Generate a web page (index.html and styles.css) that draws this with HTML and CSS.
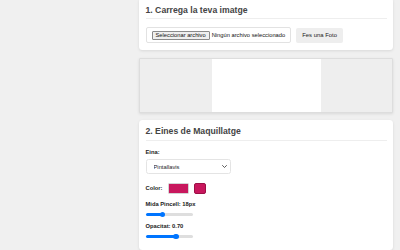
FILE: index.html
```html
<!DOCTYPE html>
<html lang="ca">
<head>
    <meta charset="UTF-8">
    <meta name="viewport" content="width=device-width, initial-scale=1.0">
    <title>Maquillatge Virtual</title>
    <link rel="stylesheet" href="styles.css">
</head>
<body>
    <main class="column">
        <!-- pas 1: carregar imatge -->
        <section class="card">
            <h2 class="card-title">1. Carrega la teva imatge</h2>
            <div class="upload-row">
                <label class="file-input">
                    <input type="file" accept="image/*" hidden>
                    <span class="file-btn">Seleccionar archivo</span>
                    <span class="file-name">Ningún archivo seleccionado</span>
                </label>
                <button class="btn" type="button">Fes una Foto</button>
            </div>
        </section>

        <!-- llenç -->
        <section class="card canvas-card">
            <canvas class="canvas" width="109" height="53"></canvas>
        </section>

        <!-- pas 2: eines -->
        <section class="card">
            <h2 class="card-title">2. Eines de Maquillatge</h2>

            <div class="field field-select">
                <label class="label" for="tool">Eina:</label>
                <div class="select-wrap">
                    <select id="tool" class="select">
                        <option>Pintallavis</option>
                        <option>Ombra d'ulls</option>
                        <option>Colorete</option>
                    </select>
                    <svg class="chevron" width="5" height="3" viewBox="0 0 10 6">
                        <path d="M1 1l4 4 4-4" fill="none" stroke="#333" stroke-width="1.6" stroke-linecap="round" stroke-linejoin="round"/>
                    </svg>
                </div>
            </div>

            <div class="field color-field">
                <label class="label" for="color">Color:</label>
                <input type="color" id="color" class="color-input" value="#c8175d">
                <span class="swatch"></span>
            </div>

            <div class="field">
                <label class="label" for="size">Mida Pincell: 18px</label>
                <input type="range" id="size" class="range" min="1" max="50" value="18" style="--fill: 36.5%">
            </div>

            <div class="field field-last">
                <label class="label" for="opacity">Opacitat: 0.70</label>
                <input type="range" id="opacity" class="range" min="0.1" max="1" step="0.05" value="0.7" style="--fill: 64.7%">
            </div>
        </section>
    </main>
</body>
</html>
```

FILE: styles.css
```css
/* pàgina */
html, body {
    overflow: hidden;
}

body {
    margin: 0;
    background-color: #f0f0f0;
    font-family: "Liberation Sans", Arial, sans-serif;
    color: #333;
}

/* columna de la dreta */
.column {
    width: 254px;
    margin: -2px 7px 0 auto;
}

/* targetes */
.card {
    background-color: #fff;
    border-radius: 3.5px;
    box-shadow: 0 1px 3px rgba(0, 0, 0, 0.1);
    padding: 6.5px;
    margin-bottom: 8px;
}

.card-title {
    margin: 0 0 8px;
    padding-bottom: 3.5px;
    border-bottom: 1px solid #eee;
    font-size: 8.66px;
    line-height: 10px;
    font-weight: bold;
    color: #444;
}

/* carregar imatge */
.upload-row {
    display: flex;
    align-items: center;
    gap: 5px;
}

.file-input {
    display: flex;
    align-items: center;
    height: 16px;
    box-sizing: border-box;
    padding: 0 5px;
    border: 1px solid #e2e2e2;
    border-radius: 2px;
    font-size: 5.76px;
    color: #111;
    cursor: pointer;
}

.file-btn {
    padding: 0.5px 3px;
    margin-right: 2px;
    background-color: #efefef;
    border: 0.5px solid #8a8a8a;
    border-radius: 1px;
}

.btn {
    height: 15px;
    padding: 0 6px;
    border: none;
    border-radius: 2px;
    background-color: #eee;
    font-family: inherit;
    font-size: 5.9px;
    color: #222;
    cursor: pointer;
}

/* llenç */
.canvas-card {
    display: flex;
    justify-content: center;
    padding: 0;
    margin-bottom: 7px;
    background-color: #eee;
    border: 1px solid #ddd;
    border-radius: 1px;
}

.canvas {
    display: block;
    background-color: #fff;
}

/* controls */
.field {
    margin-bottom: 6px;
}

.field-select {
    margin-bottom: 8.5px;
}

.field-last {
    margin-bottom: 4px;
}

.label {
    display: block;
    margin-bottom: 3.5px;
    font-size: 5.77px;
    line-height: 7px;
    font-weight: bold;
    color: #222;
}

.select-wrap {
    position: relative;
    width: 85px;
}

.select {
    -webkit-appearance: none;
    appearance: none;
    display: block;
    width: 100%;
    height: 15px;
    padding: 0 7px;
    border: 1px solid #e4e4e4;
    border-radius: 2.5px;
    background-color: #fff;
    font-family: inherit;
    font-size: 5.78px;
    color: #222;
}

.chevron {
    position: absolute;
    right: 4px;
    top: 6px;
    pointer-events: none;
}

.color-field {
    display: flex;
    align-items: center;
    margin-bottom: 7px;
}

.color-field .label {
    display: inline-block;
    margin: 0 5.5px 0 0;
}

.color-input {
    -webkit-appearance: none;
    appearance: none;
    width: 21px;
    height: 11.5px;
    padding: 0;
    margin: 0 5px 0 0;
    border: 1px solid #d4d4d4;
    border-radius: 1px;
    background: #fff;
    cursor: pointer;
}

.color-input::-webkit-color-swatch-wrapper {
    padding: 0;
}

.color-input::-webkit-color-swatch {
    border: none;
    border-radius: 0;
}

.swatch {
    width: 12px;
    height: 11.5px;
    box-sizing: border-box;
    background-color: #c8175d;
    border: 1px solid #9c1046;
    border-radius: 2px;
}

/* lliscadors */
.range {
    -webkit-appearance: none;
    appearance: none;
    display: block;
    width: 47px;
    height: 5.5px;
    margin: 0;
    background: transparent;
}

.range::-webkit-slider-runnable-track {
    height: 2.5px;
    border-radius: 2px;
    background: linear-gradient(to right, #0075ff var(--fill), #dedede var(--fill));
}

.range::-webkit-slider-thumb {
    -webkit-appearance: none;
    appearance: none;
    width: 5.5px;
    height: 5.5px;
    margin-top: -1.5px;
    border: none;
    border-radius: 50%;
    background-color: #0075ff;
}
```
